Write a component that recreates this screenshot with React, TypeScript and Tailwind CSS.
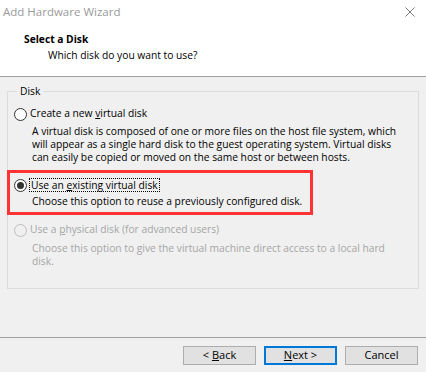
import React from 'react';

const Radio: React.FC<{ checked?: boolean; disabled?: boolean }> = ({ checked, disabled }) => (
    <span
        className={`flex h-[13px] w-[13px] shrink-0 items-center justify-center rounded-full border ${
            disabled ? 'border-[#bcbcbc] bg-[#f0f0f0]' : 'border-[#333333] bg-white'
        }`}
    >
        {checked && <span className="h-[7px] w-[7px] rounded-full bg-[#333333]" />}
    </span>
);

const Button: React.FC<{ primary?: boolean; children: React.ReactNode }> = ({ primary, children }) => (
    <button
        className={`flex h-[19px] w-[73px] items-center justify-center bg-[#e1e1e1] text-[11px] text-black ${
            primary ? 'border-2 border-[#0078d7]' : 'border border-[#adadad]'
        }`}
    >
        {children}
    </button>
);

export default function App() {
    return (
        <div
            className="flex h-[372px] w-[426px] flex-col overflow-hidden bg-[#f0f0f0] text-[10.25px] text-black"
            style={{ fontFamily: '"Open Sans", "Noto Sans", sans-serif' }}
        >
            {/* header */}
            <div className="h-[77px] shrink-0 border-b border-[#a0a0a0] bg-white">
                <div className="flex h-[24px] items-center justify-between pl-[3px] pr-[11px]">
                    <span className="text-[11.5px] text-[#9a9a9a]">Add Hardware Wizard</span>
                    <svg width="10" height="10" viewBox="0 0 10 10" className="text-[#7a7a7a]">
                        <path d="M0.5 0.5 L9.5 9.5 M9.5 0.5 L0.5 9.5" stroke="currentColor" strokeWidth="1" />
                    </svg>
                </div>
                <div className="mt-[8px] pl-[24px] font-bold leading-[14px]">Select a Disk</div>
                <div className="mt-[2px] pl-[48px] leading-[14px]">Which disk do you want to use?</div>
            </div>

            {/* body */}
            <div className="flex-1">
                <fieldset className="ml-[7px] mt-[8px] h-[204px] w-[412px] border border-[#dcdcdc] pl-[6px]">
                    <legend className="ml-[3px] px-[3px] leading-[13px]">Disk</legend>

                    <div className="mt-[9px] flex h-[14px] items-center gap-[3px]">
                        <Radio />
                        <span>
                            Create a new <u>v</u>irtual disk
                        </span>
                    </div>
                    <div className="mt-[4px] whitespace-nowrap pl-[18px] leading-[13px]">
                        A virtual disk is composed of one or more files on the host file system, which
                        <br />
                        will appear as a single hard disk to the guest operating system. Virtual disks
                        <br />
                        can easily be copied or moved on the same host or between hosts.
                    </div>

                    <div className="-ml-[7px] mt-[6px] w-[306px] border-[3px] border-[#ff3333] pb-[4px] pl-[4px] pt-[5px]">
                        <div className="flex h-[14px] items-center gap-[2px]">
                            <Radio checked />
                            <span className="border border-dotted border-black px-px leading-[12px]">
                                Use an <u>e</u>xisting virtual disk
                            </span>
                        </div>
                        <div className="mt-[3px] pl-[18px] leading-[13px]">
                            Choose this option to reuse a previously configured disk.
                        </div>
                    </div>

                    <div className="mt-[8px] flex h-[14px] items-center gap-[3px] text-[#a6a6a6]">
                        <Radio disabled />
                        <span>
                            Use a <u>p</u>hysical disk (for advanced users)
                        </span>
                    </div>
                    <div className="mt-[5px] whitespace-nowrap pl-[18px] leading-[13px] text-[#a6a6a6]">
                        Choose this option to give the virtual machine direct access to a local hard
                        <br />
                        disk.
                    </div>
                </fieldset>
            </div>

            {/* footer */}
            <div className="flex h-[35px] shrink-0 justify-end gap-[8px] border-t border-[#a0a0a0] pr-[8px] pt-[8px]">
                <Button>
                    &lt;&nbsp;<u>B</u>ack
                </Button>
                <Button primary>
                    <u>N</u>ext&nbsp;&gt;
                </Button>
                <Button>Cancel</Button>
            </div>
        </div>
    );
}
